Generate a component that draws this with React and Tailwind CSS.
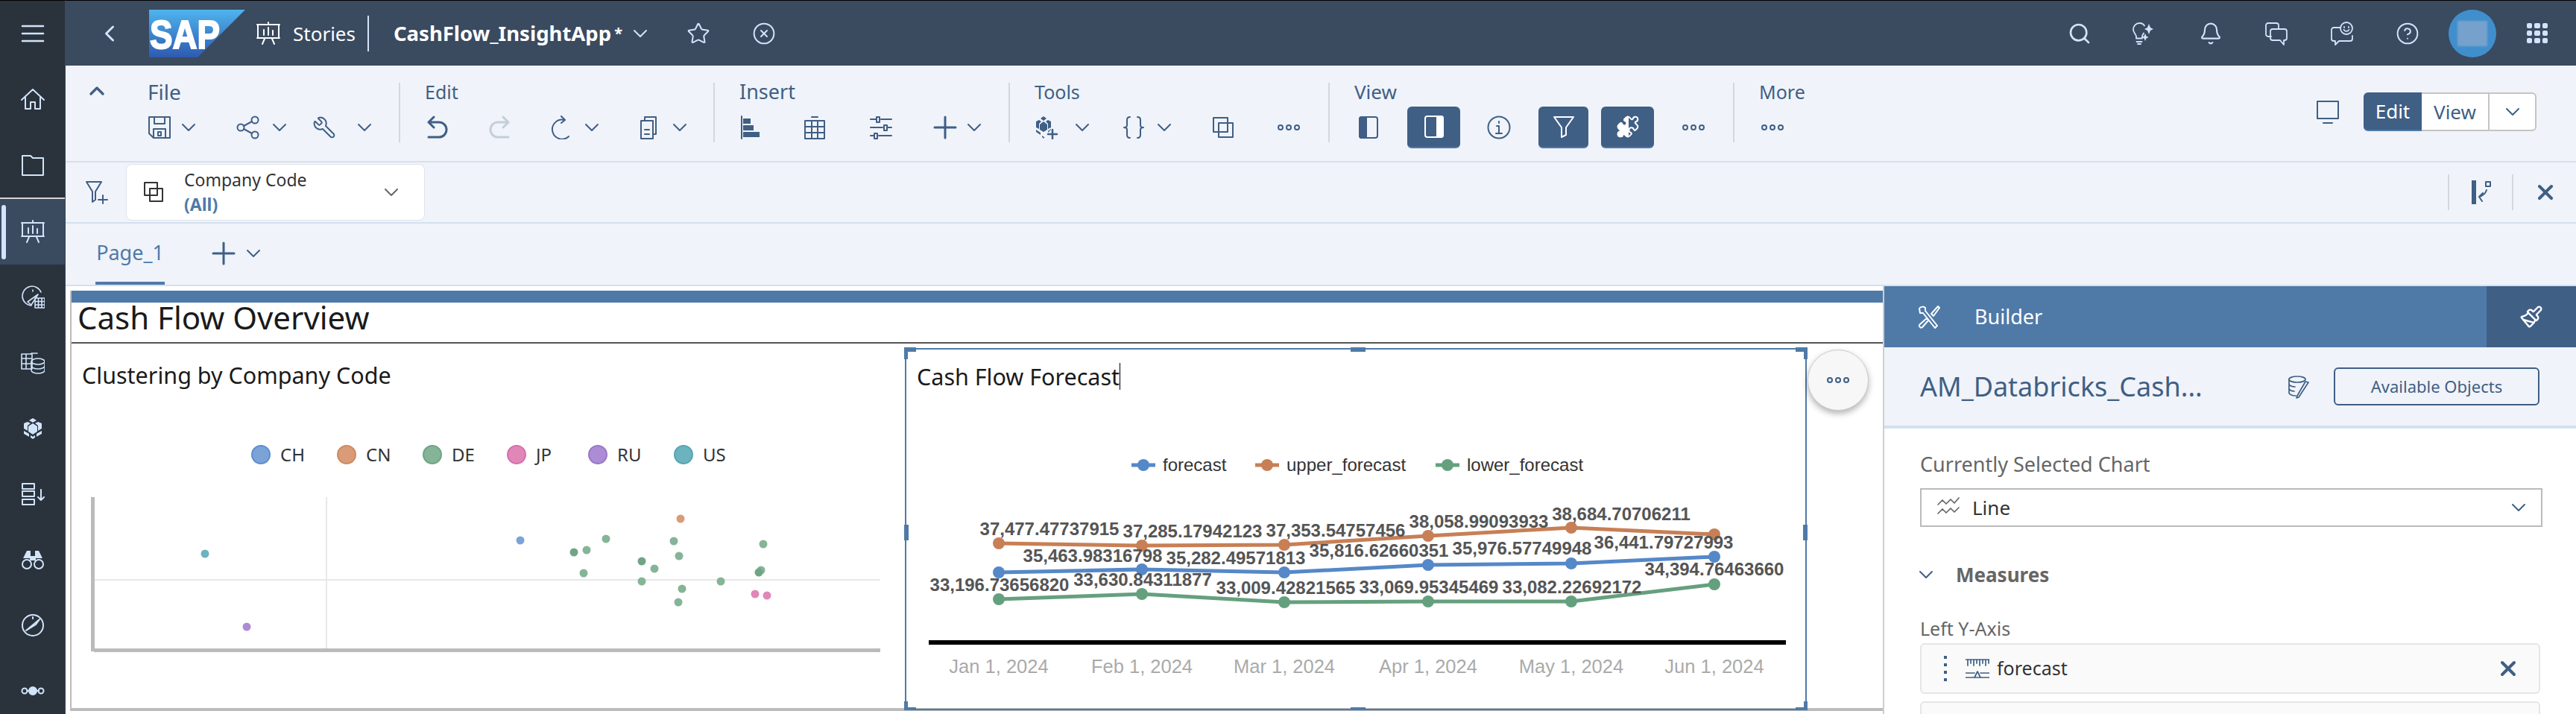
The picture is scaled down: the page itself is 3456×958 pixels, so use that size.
import React from "react";
import { Search, Bell, CircleHelp, Star, CircleX, Wrench, Paintbrush, Puzzle, ChevronDown, ChevronUp, ChevronLeft, X } from "lucide-react";

const S = ({ children, className = "", sw = 2 }) => (
  <svg viewBox="0 0 32 32" fill="none" stroke="currentColor" strokeWidth={sw} strokeLinecap="round" strokeLinejoin="round" className={`w-8 h-8 shrink-0 ${className}`}>
    {children}
  </svg>
);
const Chev = ({ className = "" }) => (
  <span className={`w-4 h-8 flex items-center justify-center shrink-0 ${className}`}>
    <ChevronDown strokeWidth={1.5} className="w-8 h-8 shrink-0" />
  </span>
);
const More = ({ className = "" }) => (
  <S className={className}><circle cx="5" cy="16" r="3" /><circle cx="16" cy="16" r="3" /><circle cx="27" cy="16" r="3" /></S>
);
const StoriesIcon = ({ className = "" }) => (
  <S className={className}><path d="M16 1v3M1 4h30M2 4v18h28V4M1 22h30M11 23l-3 7M21 23l3 7" /><path d="M10 11v7M16 8v10M22 12v6" /></S>
);
const Cube = ({ className = "" }) => (
  <S className={className} sw={0}><path fill="currentColor" d="M16 2l5 3-5 3-5-3zM9 7l4 2-4 3v7l-5-3V9zM23 7l5 2v7l-5 3v-7l-4-3zM4 19l7 4 0 4-7-4zM28 19l-7 4v4l7-4zM16 9l6 4v7l-6 4-6-4v-7zM13 25l3 2 3-2v3l-3 2-3-2z" /></S>
);

const sidebar = [
  <S sw={2.5}><path d="M2 6h28M2 16h28M2 26h28" /></S>,
  <S><path d="M1 17L16 3l15 14M6 14v15h7v-9h6v9h7V14" /></S>,
  <S><path d="M2 4h11l3 3h14v23H2z" /></S>,
  null,
  <S sw={1.6}><path d="M27 9A13 13 0 1 0 14 27M9 22l14-10-9 14zM16 6v2" /><path d="M19 17h13v13H19zM19 21.5h13M19 26h13M23.5 17v13M28 17v13" /></S>,
  <S sw={1.6}><path d="M1 4h14v20H1zM1 10h14M1 17h14M7 4v20M14 3h8" /><ellipse cx="23" cy="14" rx="9" ry="4" /><path d="M14 14v12c0 2 4 4 9 4s9-2 9-4V14M14 20c0 2 4 4 9 4s9-2 9-4" /></S>,
  <Cube />,
  <S><path d="M2 2h16v7H2zM2 12h16v7H2zM2 23h16v7H2zM27 10v14M23 20l4 4 4-4" /></S>,
  <S><path fill="currentColor" d="M8 4h5v10H3zM19 4h5l5 10H19zM12 11h8v6h-8z" stroke="none" /><circle cx="8" cy="22" r="6" /><circle cx="24" cy="22" r="6" /></S>,
  <S><circle cx="16" cy="16" r="14" /><path d="M7 23l12-10 6-5-5 7zM16 5v2" /></S>,
  <S><circle cx="5" cy="16" r="3.500" /><circle cx="27" cy="16" r="3.500" /><circle cx="16" cy="16" r="5" fill="currentColor" /><path d="M8 16h3M21 16h3" /></S>,
];

const Group = ({ title, w, children, size = "text-[26px]" }) => (
  <div className={`${w} shrink-0 flex flex-col pl-[33px]`}>
    <div className={`h-6 flex items-center ${size} leading-6 mt-[23px]`}>{title}</div>
    <div className="flex items-center h-14 mt-2">{children}</div>
  </div>
);
const Divider = () => <div className="w-0.5 h-20 mt-[23px] bg-[#d4d8de] shrink-0" />;
const ActiveBtn = ({ w, ml, children }) => (
  <div className={`${w} ${ml} h-14 rounded-md bg-[#3f5f85] border-b-2 border-[#4f7aa8] text-white flex items-center justify-center shrink-0`}>{children}</div>
);

const upper = [[1340,730],[1532,733],[1723,732],[1916,720],[2108,709],[2300,718]];
const fc = [[1340,769],[1532,765],[1723,769],[1916,759],[2108,757],[2300,748]];
const lower = [[1340,805],[1532,798],[1723,809],[1916,808],[2108,808],[2300,785]];
const pts = (a) => a.map((p) => p.join(",")).join(" ");
const labels = [
  ["37,477.47737915",1408,710],["37,285.17942123",1600,713],["37,353.54757456",1792,712],["38,058.99093933",1984,700],["38,684.70706211",2175,690],
  ["35,463.98316798",1466,746],["35,282.49571813",1658,749],["35,816.62660351",1850,739],["35,976.57749948",2042,736],["36,441.79727993",2232,728],
  ["33,196.73656820",1341,785],["33,630.84311877",1533,778],["33,009.42821565",1725,789],["33,069.95345469",1917,788],["33,082.22692172",2109,788],["34,394.76463660",2300,764],
];
const dates = ["Jan 1, 2024","Feb 1, 2024","Mar 1, 2024","Apr 1, 2024","May 1, 2024","Jun 1, 2024"];
const scatter = [
  [275,743,"#6cb3c0"],[331,841,"#ac8cd4"],[698,725,"#7ba3d8"],[913,696,"#d99b78"],
  [813,723,"#85b496"],[770,741,"#6fa585"],[787,738,"#85b496"],[904,726,"#85b496"],[1024,730,"#85b496"],[911,746,"#85b496"],[861,753,"#6fa585"],[878,763,"#85b496"],[783,769,"#85b496"],[1021,765,"#85b496"],[1018,768,"#6fa585"],[861,780,"#85b496"],[967,780,"#85b496"],[915,790,"#85b496"],[910,808,"#85b496"],
  [1013,797,"#e087b8"],[1029,799,"#e087b8"],
];
const Leg = ({ w, color, border, t }) => (
  <div className={`${w} flex items-center gap-[13px] shrink-0`}>
    <span className={`w-[26px] h-[26px] rounded-full border-2 ${color} ${border}`} />
    <span className="text-[24px] leading-[30px] text-[#333]">{t}</span>
  </div>
);
const LineLeg = ({ w, c, t }) => (
  <div className={`${w} flex items-center gap-[10px] shrink-0`}>
    <svg viewBox="0 0 32 20" className="w-8 h-5"><path d="M0 10h32" stroke={c} strokeWidth="5" /><circle cx="16" cy="10" r="8" fill={c} /></svg>
    <span className="font-['Liberation_Sans',sans-serif] text-[24px] leading-[30px] text-[#333]">{t}</span>
  </div>
);

export default function App() {
  return (
    <div className="flex w-[3456px] h-[958px] overflow-hidden bg-white font-['Noto_Sans',sans-serif]">
      <aside className="w-[88px] h-full shrink-0 flex flex-col bg-[#2a323c] border-t border-black border-r border-r-[#3a4a5f] text-[#d1e4fa]">
        {sidebar.map((ic, i) =>
          ic ? (
            <div key={i} className="h-[88px] flex items-center justify-center shrink-0">{ic}</div>
          ) : (
            <div key={i} className="relative h-[90px] bg-[#3a4a5f] border-t-2 border-[#d5d5d5] flex items-center justify-center shrink-0">
              <span className="absolute left-0.5 top-2 w-[6px] h-[73px] rounded-full bg-[#d1e4fa]" />
              <StoriesIcon />
            </div>
          )
        )}
      </aside>

      <div className="flex-1 min-w-0 flex flex-col">
        <header className="h-[88px] shrink-0 flex items-center bg-[#3a4a5f] border-t border-black text-[#d1e4fa]">
          <ChevronLeft strokeWidth={2} className="w-9 h-11 ml-[41px]" />
          <svg viewBox="0 0 129 64" className="w-[129px] h-16 ml-[35px] shrink-0">
            <defs>
              <linearGradient id="sapg" x1="0" y1="0" x2="0" y2="1"><stop offset="0" stopColor="#4fb4ee" /><stop offset="1" stopColor="#2e5ab0" /></linearGradient>
            </defs>
            <polygon points="0,0 129,0 65,64 0,64" fill="url(#sapg)" />
            <text x="1" y="52" textLength="94" lengthAdjust="spacingAndGlyphs" fontFamily="Liberation Sans" fontWeight="700" fontSize="54" fill="#fff" stroke="#fff" strokeWidth="2">SAP</text>
          </svg>
          <StoriesIcon className="ml-[15px] text-white" />
          <span className="ml-[17px] text-[26px] leading-8 text-white">Stories</span>
          <div className="w-0.5 h-12 bg-[#d1e4fa] ml-[16px]" />
          <span className="ml-[33px] text-[27.500px] leading-8 font-bold text-white whitespace-nowrap">CashFlow_InsightApp</span>
          <span className="text-[20px] ml-1 text-white font-bold">*</span>
          <ChevronDown strokeWidth={1.5} className="w-8 h-8 ml-2" />
          <Star strokeWidth={1.5} className="w-8 h-8 ml-[46px]" />
          <CircleX strokeWidth={1.5} className="w-8 h-8 ml-[56px]" />
          <div className="flex-1" />
          <Search strokeWidth={2} className="w-8 h-8" />
          <S className="ml-[53px]" sw={1.8}><path d="M18 5.5C16.8 3.5 14.5 2 11.500 2 6.500 2 3 6 3 10.500c0 4 3 6 4 9v3h8v-3c.500-1.500 1-2.500 2-4M7.500 27h7M9 30h4" /><path fill="currentColor" stroke="none" d="M24 3l2 5 4 2-4 2-2 5-2-5-4-2 4-2zM19 16l1.500 3.500 3 1.500-3 1.500L19 26l-1.500-3.500-3-1.500 3-1.500z" /></S>
          <Bell strokeWidth={1.6} className="w-8 h-8 ml-[59px]" />
          <S className="ml-[56px]" sw={1.8}><path d="M5 2h11a3 3 0 0 1 3 3v4M9 20H5a3 3 0 0 1-3-3V5a3 3 0 0 1 3-3" /><path d="M11 10h16a3 3 0 0 1 3 3v9a3 3 0 0 1-3 3h-1v6l-5-6h-10a3 3 0 0 1-3-3v-9a3 3 0 0 1 3-3z" /></S>
          <S className="ml-[56px]" sw={1.8}><circle cx="22" cy="9" r="8" /><path d="M19 7v1M25 7v1M18.500 11c2 2.500 5 2.500 7 0M13 8H5a3 3 0 0 0-3 3v12a3 3 0 0 0 3 3h2v5l5-5h15a3 3 0 0 0 3-3v-4" /></S>
          <CircleHelp strokeWidth={1.5} className="w-8 h-8 ml-[56px]" />
          <div className="w-16 h-16 ml-[39px] rounded-full bg-[#408fcc] flex items-center justify-center shrink-0">
            <div className="w-10 h-[34px] bg-[#76a1cc] blur-[1px]" />
          </div>
          <div className="ml-[41px] mr-[38px] w-7 grid grid-cols-3 gap-[3px]">
            {[...Array(9)].map((_, i) => <span key={i} className="h-[7px] rounded-[2px] bg-[#d1e4fa]" />)}
          </div>
        </header>

        <section className="h-[130px] shrink-0 flex bg-[#f0f3f9] border-b-2 border-[#d5e0ef] text-[#3f5f85]">
          <div className="w-[110px] shrink-0 pl-[26px] pt-[18px]">
            <ChevronUp strokeWidth={2.5} className="w-8 h-8" />
          </div>
          <div className="w-[337px] shrink-0 flex flex-col">
            <div className="h-6 flex items-center text-[28px] leading-6 mt-[23px]">File</div>
            <div className="flex items-center h-14 mt-2">
              <S><path d="M2 2h28v28H8l-6-6zM9 2v9h14V2M8 30V18h16v12M14 22h4v5h-4z" /></S>
              <Chev className="ml-[15px]" />
              <S className="ml-[56px]"><circle cx="6" cy="16" r="4.500" /><circle cx="25" cy="6" r="4.500" /><circle cx="25" cy="26" r="4.500" /><path d="M10 14l11-6M10 18l11 6" /></S>
              <Chev className="ml-[18px]" />
              <Wrench strokeWidth={1.5} className="w-8 h-8 ml-9 -scale-x-100 shrink-0" />
              <Chev className="ml-[30px]" />
            </div>
          </div>
          <Divider />
          <Group title="Edit" w="w-[420px]" size="text-[25px]">
            <S sw={3}><path d="M12 2L5 9l7 7M5 9h14a7 7 0 0 1 0 20H5" /></S>
            <S sw={3} className="ml-[53px] -scale-x-100 text-[#c4cfdb]"><path d="M12 2L5 9l7 7M5 9h14a7 7 0 0 1 0 20H5" /></S>
            <S className="ml-[51px]"><path d="M19 6a13 13 0 1 0 6 22M15 1l5 5-5 4" /></S>
            <Chev className="ml-4" />
            <S className="ml-[53px]"><path d="M10 6V2h15v23h-4M5 7h16v24H5zM10 19h6M10 25h6" /></S>
            <Chev className="ml-[17px]" />
          </Group>
          <Divider />
          <Group title="Insert" w="w-[394px]" size="text-[27px]">
            <S><path d="M3 1v30" /><path fill="currentColor" stroke="none" d="M5 4h10v7H5zM5 13h14v7H5zM5 22h22v7H5z" /></S>
            <S className="ml-[53px]"><path d="M3 7h26v24H3zM3 15h26M3 23h26M12 7v24M20 7v24M12 2h8" /></S>
            <S className="ml-[57px]"><path d="M2 5h7M16 5h14M2 16h16M25 16h5M2 27h4M13 27h17" /><path d="M10 2h4v7h-4zM20 13h4v7h-4zM7 24h4v7H7z" /></S>
            <S className="ml-[54px]" sw={3}><path d="M16 2v28M2 16h28" /></S>
            <Chev className="ml-[15px]" />
          </Group>
          <Divider />
          <Group title="Tools" w="w-[427px]" size="text-[25px]">
            <S sw={0}><path fill="currentColor" d="M12 1l4 3-4 3-4-3zM6 6l3 2-3 3v7L2 16V8zM18 6l4 2v8l-4 2v-7l-3-3zM12 8l5 4v7l-5 3-5-3v-7zM2 19l6 4v3l-6-4zM22 18v1l-4 4v-2zM10 27l3 2v2l-3-2z" /><path d="M24 19v12M18 25h12" stroke="currentColor" strokeWidth="2.5" /></S>
            <Chev className="ml-6" />
            <S className="ml-[45px]"><path d="M11 2c-3 0-4 1-4 4v7c0 2-1 3-4 3 3 0 4 1 4 3v7c0 3 1 4 4 4M21 2c3 0 4 1 4 4v7c0 2 1 3 4 3-3 0-4 1-4 3v7c0 3-1 4-4 4" /></S>
            <Chev className="ml-[17px]" />
            <S className="ml-[55px]"><path d="M3 3h19v19H3zM10 10h19v19H10z" /></S>
            <More className="ml-14" />
          </Group>
          <Divider />
          <Group title="View" w="w-[541px]" size="text-[26px]">
            <S className="ml-[3px]"><path d="M7 2h18a3 3 0 0 1 3 3v22a3 3 0 0 1-3 3H7a3 3 0 0 1-3-3V5a3 3 0 0 1 3-3z" /><path fill="currentColor" d="M7 2h6v28H7a3 3 0 0 1-3-3V5a3 3 0 0 1 3-3z" /></S>
            <ActiveBtn w="w-[71px]" ml="ml-9">
              <S><path d="M7 2h18a3 3 0 0 1 3 3v22a3 3 0 0 1-3 3H7a3 3 0 0 1-3-3V5a3 3 0 0 1 3-3z" /><path fill="currentColor" d="M20 2h5a3 3 0 0 1 3 3v22a3 3 0 0 1-3 3h-5z" /></S>
            </ActiveBtn>
            <S className="ml-9"><circle cx="16" cy="16" r="14.500" /><path d="M16 8v2M13 14h3v10M12 24h8" /></S>
            <ActiveBtn w="w-[67px]" ml="ml-[37px]">
              <S><path d="M3 3h26L19 17v10l-6 3V17z" /></S>
            </ActiveBtn>
            <ActiveBtn w="w-[71px]" ml="ml-[17px]">
              <div className="relative w-8 h-8">
                <Puzzle strokeWidth={1.5} className="w-8 h-8" />
                <Puzzle strokeWidth={1.5} fill="#fff" className="absolute inset-0 w-8 h-8 [clip-path:inset(0_45%_0_0)]" />
              </div>
            </ActiveBtn>
            <More className="ml-[37px]" />
          </Group>
          <Divider />
          <Group title="More" w="w-[130px]" size="text-[25px]">
            <More className="ml-0.5" />
          </Group>
          <div className="flex-1" />
          <div className="flex items-start pt-9 pr-[53px]">
            <S className="mt-2.5"><path d="M2 2h28v23H2zM10 31h12" /></S>
            <div className="ml-8 flex h-[52px] text-[26px] leading-none">
              <span className="w-[78px] flex items-center justify-center rounded-l-md bg-[#3f5f85] border-b-2 border-[#4f7aa8] text-white">Edit</span>
              <span className="w-[91px] flex items-center justify-center bg-white border-y-2 border-r-2 border-[#c4c4c4]">View</span>
              <span className="w-[63px] flex items-center justify-center bg-white border-y-2 border-r-2 border-[#c4c4c4] rounded-r-md"><ChevronDown strokeWidth={1.5} className="w-8 h-8" /></span>
            </div>
          </div>
        </section>

        <section className="h-[82px] shrink-0 flex items-center bg-[#f0f3f9] border-b-2 border-[#d5e0ef]">
          <S className="ml-[26px] text-[#3f5f85]"><path d="M2 2h20l-8 13v11l-4 3V15zM24 20v11M18 26h12" /></S>
          <div className="ml-[23px] w-[401px] h-[76px] bg-white rounded-lg border border-[#dfe3ea] flex items-center">
            <S className="ml-[20px] text-[#333]"><path d="M4 3h17v17H4zM11 11h17v17H11z" /></S>
            <div className="ml-[25px] flex-1 flex flex-col">
              <span className="text-[23px] leading-[33px] text-[#333]">Company Code</span>
              <span className="text-[23px] leading-[33px] font-bold text-[#4f7aa8]">(All)</span>
            </div>
            <ChevronDown strokeWidth={1.5} className="w-8 h-8 mr-[28px] text-[#666]" />
          </div>
          <div className="flex-1" />
          <div className="w-0.5 h-12 bg-[#d4d8de]" />
          <S className="mx-[26px] text-[#3f5f85]"><path d="M7 0v32" strokeWidth="6" strokeLinecap="butt" /><path d="M23 2h6v6h-6zM24 13c-2 6-6 8-10 9M14 22l5-5M14 22l4 6" /></S>
          <div className="w-0.5 h-12 bg-[#d4d8de]" />
          <X strokeWidth={3} className="w-8 h-8 ml-[27px] mr-[25px] text-[#3f5f85]" />
        </section>

        <section className="h-[84px] shrink-0 flex bg-[#f0f3f9] border-b-2 border-[#d5e0ef] text-[#3f5f85]">
          <div className="ml-10 w-[93px] border-b-4 border-[#4f7aa8] flex items-center justify-center text-[27px] leading-8 text-[#4f7aa8] whitespace-nowrap">Page_1</div>
          <div className="flex items-center ml-[63px] h-[80px] gap-4">
            <S sw={3}><path d="M16 2v28M2 16h28" /></S>
            <Chev />
          </div>
        </section>

        <main className="flex-1 min-h-0 flex">
          <div className="w-[2438px] shrink-0 pt-1.5 pl-1.5 bg-white">
            <div className="relative h-[564px] border-l-2 border-b-4 border-[#bbbbbb]">
              <div className="h-4 bg-[#4f7aa8]" />
              <div className="h-[55px] border-b-2 border-[#555] pl-2 text-[42px] leading-[40px] text-[#1a1a1a] whitespace-nowrap">Cash Flow Overview</div>
              <div className="flex">
                <div className="w-[1118px] shrink-0 flex flex-col">
                  <div className="h-[86px] mb-0.5 pl-3.5 flex items-center text-[30.5px] text-[#1a1a1a]">Clustering by Company Code</div>
                  <div className="mt-[46px] ml-[241px] flex h-[30px]">
                    <Leg w="w-[115px]" color="bg-[#7ba3d8]" border="border-[#5d8ed0]" t="CH" />
                    <Leg w="w-[115px]" color="bg-[#d99b78]" border="border-[#d08a60]" t="CN" />
                    <Leg w="w-[113px]" color="bg-[#85b496]" border="border-[#6fa585]" t="DE" />
                    <Leg w="w-[109px]" color="bg-[#e087b8]" border="border-[#d870aa]" t="JP" />
                    <Leg w="w-[115px]" color="bg-[#ac8cd4]" border="border-[#9a78c8]" t="RU" />
                    <Leg w="w-[100px]" color="bg-[#6cb3c0]" border="border-[#5aa4b2]" t="US" />
                  </div>
                  <svg viewBox="96 660 1118 220" className="mt-[35px] w-[1118px] h-[220px]">
                    <path d="M438 667V870M127 778H1181" stroke="#e8e8e8" strokeWidth="2" />
                    <path d="M124.500 667V874M126 872.500H1181" stroke="#bbbbbb" strokeWidth="5" />
                    {scatter.map(([x, y, c], i) => <circle key={i} cx={x} cy={y} r="5.500" fill={c} />)}
                  </svg>
                </div>
                <div className="relative mt-1.5 w-[1210px] h-[486px] shrink-0 border-2 border-[#4f7aa8] flex flex-col">
                  <div className="h-[72px] pl-3.5 flex items-center text-[30.5px] leading-9 text-[#1a1a1a]"><span className="border-r border-black">Cash Flow Forecast</span></div>
                  <div className="mt-[68px] ml-[302px] flex h-[30px]">
                    <LineLeg w="w-[166px]" c="#5588c8" t="forecast" />
                    <LineLeg w="w-[242px]" c="#c87f55" t="upper_forecast" />
                    <LineLeg w="w-[240px]" c="#65a07e" t="lower_forecast" />
                  </div>
                  <svg viewBox="1216 640 1206 310" className="w-[1206px] h-[310px] font-['Liberation_Sans']">
                    <polyline points={pts(upper)} fill="none" stroke="#c87f55" strokeWidth="5" />
                    <polyline points={pts(fc)} fill="none" stroke="#5588c8" strokeWidth="5" />
                    <polyline points={pts(lower)} fill="none" stroke="#65a07e" strokeWidth="5" />
                    {upper.map(([x, y]) => <circle key={x} cx={x} cy={y} r="8" fill="#c87f55" />)}
                    {fc.map(([x, y]) => <circle key={x} cx={x} cy={y} r="8" fill="#5588c8" />)}
                    {lower.map(([x, y]) => <circle key={x} cx={x} cy={y} r="8" fill="#65a07e" />)}
                    {labels.map(([t, x, y]) => <text key={t} x={x} y={y + 9} textAnchor="middle" fontSize="24" fontWeight="700" fill="#555">{t}</text>)}
                    <rect x="1246" y="860" width="1150" height="6" fill="#000" />
                    {dates.map((d, i) => <text key={d} x={upper[i][0]} y="904" textAnchor="middle" fontSize="25.500" fill="#aaa">{d}</text>)}
                  </svg>
                  <span className="absolute -left-[3px] -top-[3px] w-4 h-[6px] bg-[#4f7aa8]" />
                  <span className="absolute -left-[3px] -top-[3px] w-[5px] h-4 bg-[#4f7aa8]" />
                  <span className="absolute -right-[3px] -top-[3px] w-4 h-[6px] bg-[#4f7aa8]" />
                  <span className="absolute -right-[3px] -top-[3px] w-[5px] h-4 bg-[#4f7aa8]" />
                  <span className="absolute -left-[3px] -bottom-[2px] w-4 h-1 bg-[#4f7aa8]" />
                  <span className="absolute -left-[3px] -bottom-[2px] w-[5px] h-3 bg-[#4f7aa8]" />
                  <span className="absolute -right-[3px] -bottom-[2px] w-4 h-1 bg-[#4f7aa8]" />
                  <span className="absolute -right-[3px] -bottom-[2px] w-[5px] h-3 bg-[#4f7aa8]" />
                  <span className="absolute left-[596px] -top-[3px] w-5 h-[6px] bg-[#4f7aa8]" />
                  <span className="absolute left-[596px] -bottom-[2px] w-5 h-1 bg-[#4f7aa8]" />
                  <span className="absolute -left-[3px] top-[235px] w-[6px] h-[21px] bg-[#4f7aa8]" />
                  <span className="absolute -right-[3px] top-[235px] w-[6px] h-[21px] bg-[#4f7aa8]" />
                  <div className="absolute -right-[85px] top-0 w-[82px] h-[82px] rounded-full bg-[#f7f7f7] border border-[#ccc] shadow-[0_4px_8px_rgba(0,0,0,0.3)] flex items-center justify-center text-[#3f5f85]">
                    <More />
                  </div>
                </div>
              </div>
            </div>
          </div>

          <div className="w-[930px] shrink-0 border-l-2 border-[#cfcfcf] flex flex-col">
            <div className="h-[82px] shrink-0 flex items-center bg-[#4f7aa8] text-white">
              <S className="ml-[44px]"><path d="M3 5c2-3 6-3 8-1v4l16 20-3 3L8 11H4zM28 2l2 2-8 11-3-3zM13 18L4 26a2 2 0 0 0 3 4l8-9" /></S>
              <span className="ml-[45px] text-[27px]">Builder</span>
              <div className="flex-1" />
              <div className="w-[120px] h-full bg-[#3f5f85] flex items-center justify-center">
                <Paintbrush strokeWidth={1.8} className="w-8 h-8" />
              </div>
            </div>
            <div className="h-[109px] shrink-0 flex items-center bg-[#f0f3f9] border-b-4 border-[#d5e0ef] text-[#3f5f85]">
              <span className="ml-[48px] text-[36px] leading-10">AM_Databricks_Cash...</span>
              <div className="flex-1" />
              <S sw={1.7}><ellipse cx="13" cy="6" rx="11" ry="4" /><path d="M2 6v18c0 2 4 4 9 4M2 12c0 2 3 4 8 4M2 18c0 2 3 4 7 4M24 9L13 28l-1 3 3-1 13-20z" /></S>
              <div className="ml-[30px] mr-[49px] w-[276px] h-[51px] rounded-md border-2 border-[#3f5f85] flex items-center justify-center text-[22px]">Available Objects</div>
            </div>
            <div className="flex-1 px-[48px] pt-8 bg-white overflow-hidden">
              <div className="text-[27px] leading-8 text-[#666] whitespace-nowrap">Currently Selected Chart</div>
              <div className="mt-4 w-[835px] h-[52px] border-2 border-[#bbb] flex items-center text-[#666]">
                <S className="ml-[20px]" sw={1.7}><path d="M2 12l6-6 5 5 6-6 5 5 6-7M2 24l6-6 5 5 6-6 5 5 6-6" /></S>
                <span className="ml-4 text-[26px] text-[#333]">Line</span>
                <div className="flex-1" />
                <ChevronDown strokeWidth={1.5} className="w-8 h-8 mr-3.5 text-[#3f5f85]" />
              </div>
              <div className="mt-12 flex items-center h-8">
                <ChevronDown strokeWidth={1.5} className="w-8 h-8 -ml-2 text-[#3f5f85]" />
                <span className="ml-6 text-[26px] font-bold text-[#666]">Measures</span>
              </div>
              <div className="mt-10 text-[25px] leading-8 text-[#666]">Left Y-Axis</div>
              <div className="mt-1 w-[832px] h-[68px] rounded-md bg-[#fafafa] border-2 border-[#e5e5e5] flex items-center text-[#3f5f85]">
                <div className="ml-[30px] flex flex-col gap-[6px]">
                  {[0, 1, 2, 3].map((i) => <span key={i} className="w-1 h-1 bg-[#3f5f85]" />)}
                </div>
                <S className="ml-[25px]" sw={1.7}><path d="M0 4h32M3 4v8M7 4v5M11 4v8M15 4v5M19 4v8M23 4v5M27 4v8M31 4v5M0 22h12M20 22h12M0 28h32M12 28l4-8 4 8" /></S>
                <span className="ml-2.5 text-[25px] text-[#333]">forecast</span>
                <div className="flex-1" />
                <X strokeWidth={3} className="w-8 h-8 mr-[25px]" />
              </div>
              <div className="mt-2.5 w-[832px] h-8 rounded-md bg-[#fafafa] border-2 border-[#e5e5e5]" />
            </div>
          </div>
        </main>
      </div>
    </div>
  );
}
